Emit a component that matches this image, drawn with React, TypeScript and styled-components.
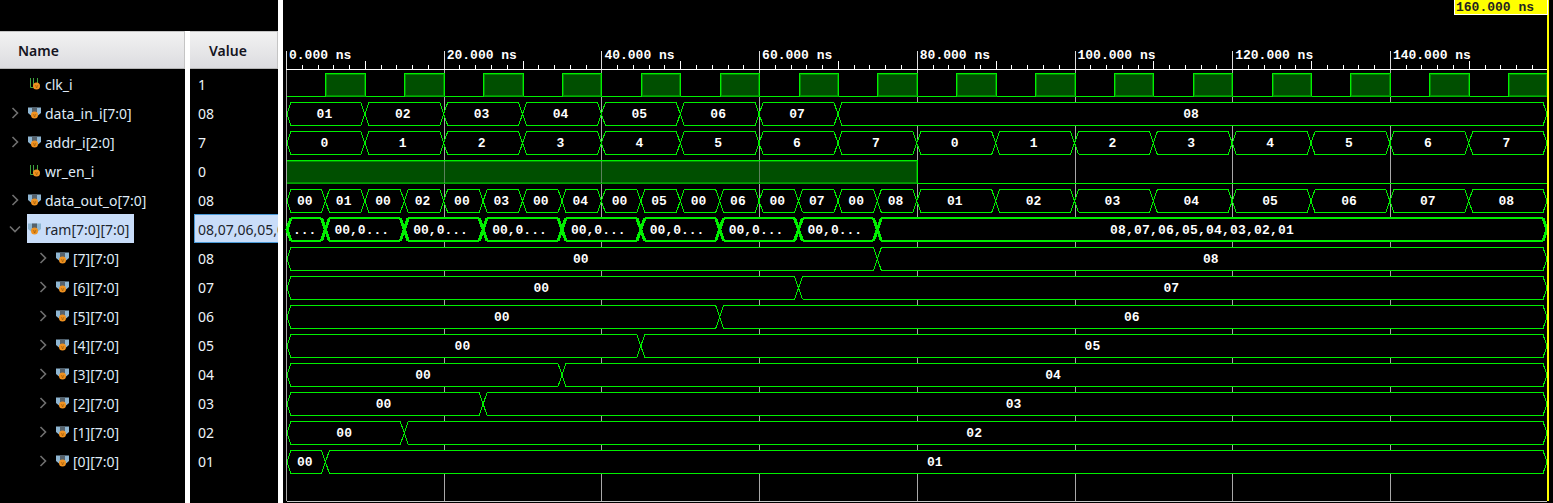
import React from 'react';
import styled, { createGlobalStyle } from 'styled-components';

const X0 = 286;
const NS = 7.885;
const END = 1547;
const GREEN = '#00f000';
const FILL = '#004f00';
const at = (t: number) => X0 + t * NS;
const rowTop = (i: number) => 73 + i * 29;

type Signal = { name: string; value: string; depth: number; kind: 'bit' | 'bus'; open?: boolean; selected?: boolean };

const signals: Signal[] = [
	{ name: 'clk_i', value: '1', depth: 0, kind: 'bit' },
	{ name: 'data_in_i[7:0]', value: '08', depth: 0, kind: 'bus' },
	{ name: 'addr_i[2:0]', value: '7', depth: 0, kind: 'bus' },
	{ name: 'wr_en_i', value: '0', depth: 0, kind: 'bit' },
	{ name: 'data_out_o[7:0]', value: '08', depth: 0, kind: 'bus' },
	{ name: 'ram[7:0][7:0]', value: '08,07,06,05,0', depth: 0, kind: 'bus', open: true, selected: true },
	{ name: '[7][7:0]', value: '08', depth: 1, kind: 'bus' },
	{ name: '[6][7:0]', value: '07', depth: 1, kind: 'bus' },
	{ name: '[5][7:0]', value: '06', depth: 1, kind: 'bus' },
	{ name: '[4][7:0]', value: '05', depth: 1, kind: 'bus' },
	{ name: '[3][7:0]', value: '04', depth: 1, kind: 'bus' },
	{ name: '[2][7:0]', value: '03', depth: 1, kind: 'bus' },
	{ name: '[1][7:0]', value: '02', depth: 1, kind: 'bus' },
	{ name: '[0][7:0]', value: '01', depth: 1, kind: 'bus' },
];

const S = {
	Page: styled.div`
		display: flex;
		width: 1553px;
		height: 503px;
		overflow: hidden;
		background: #000;
	`,
	LeftPane: styled.div`
		display: flex;
		flex-direction: column;
		width: 278px;
		padding-top: 31px;
		box-sizing: border-box;
	`,
	Columns: styled.div`
		display: flex;
		flex: 1;
		gap: 5px;
		background: #fff;
	`,
	NameColumn: styled.div`
		width: 185px;
		background: #000;
	`,
	ValueColumn: styled.div`
		width: 88px;
		background: #000;
		overflow: hidden;
	`,
	ColumnHeader: styled.div<{ $pad: number }>`
		display: flex;
		align-items: center;
		height: 38px;
		box-sizing: border-box;
		padding-left: ${(p) => p.$pad}px;
		background: linear-gradient(#f2f2f2, #dcdce0);
		border-top: 1px solid #c4c4c4;
		border-bottom: 1px solid #b4b4b4;
		border-right: 1px solid #c4c4c4;
		font: 600 14px 'Noto Sans', sans-serif;
		color: #14141e;
	`,
	TreeRow: styled.div<{ $depth: number }>`
		display: flex;
		align-items: center;
		height: 29px;
		padding-left: ${(p) => 9 + p.$depth * 28}px;
	`,
	ChevronSlot: styled.div`
		display: flex;
		width: 18px;
		color: #6f6f6f;
	`,
	Item: styled.div<{ $selected?: boolean }>`
		display: flex;
		align-items: center;
		gap: 3px;
		height: 100%;
		box-sizing: border-box;
		padding: 1px 5px 0 1px;
		background: ${(p) => (p.$selected ? '#c9ddf9' : 'transparent')};
		color: ${(p) => (p.$selected ? '#20242c' : '#dfeaf6')};
		font: 14px 'Noto Sans', sans-serif;
		white-space: nowrap;
	`,
	ValueCell: styled.div<{ $selected?: boolean }>`
		display: flex;
		align-items: center;
		height: 29px;
		box-sizing: border-box;
		margin-left: ${(p) => (p.$selected ? 4 : 0)}px;
		padding: 1px 0 0 ${(p) => (p.$selected ? 3 : 8)}px;
		background: ${(p) => (p.$selected ? '#c9ddf9' : 'transparent')};
		border: ${(p) => (p.$selected ? '1px solid #4a9ad8' : 'none')};
		border-right: none;
		color: ${(p) => (p.$selected ? '#20242c' : '#eef4fa')};
		font: 14px 'Noto Sans', sans-serif;
		white-space: nowrap;
		overflow: hidden;
	`,
	WavePane: styled.div`
		flex: 1;
		border-left: 5px solid #fff;
	`,
	WaveSvg: styled.svg`
		display: block;
		font-family: 'Liberation Mono', monospace;
		font-weight: 700;
		font-size: 13px;
	`,
};

const GlobalStyle = createGlobalStyle`
	html, body {
		margin: 0;
		background: #000;
	}
`;

function Chevron({ open }: { open?: boolean }) {
	return (
		<svg width="12" height="12" viewBox="0 0 12 12" fill="none" stroke="currentColor" strokeWidth="1.6">
			<path d={open ? 'M1 3.5 6 8.5 11 3.5' : 'M3.5 1 8.5 6 3.5 11'} />
		</svg>
	);
}

function SignalIcon({ kind }: { kind: Signal['kind'] }) {
	const cx = kind === 'bit' ? 8.5 : 6.5;
	return (
		<svg width="14" height="14" viewBox="0 0 14 14" fill="none">
			{kind === 'bit' ? (
				<path d="M2.500 1V10.500H5.500V1M9.500 1V7" stroke="#3fa33f" strokeWidth="1" />
			) : (
				<>
					<path d="M0 1.500H13V7L10 9.500H3L0 7Z" fill="#8fb6d2" />
					<path d="M4 1.500H9V6H4Z" fill="#56626c" />
				</>
			)}
			<circle cx={cx} cy="9" r="3.500" fill="#ef9120" />
			<text x={cx} y="11" fontSize="6" fill="#8a4f00" textAnchor="middle" fontFamily="Liberation Sans, sans-serif">
				v
			</text>
		</svg>
	);
}

type Segment = { from: number; to: number; text: string; x?: number };

function series(edges: number[], texts: string[]): Segment[] {
	return texts.map((text, i) => ({ from: edges[i], to: edges[i + 1], text }));
}

const step = (from: number, count: number, size: number) => Array.from({ length: count }, (_, i) => from + i * size);

const hex = (n: number) => `0${n}`;
const dataOutTexts = step(1, 8, 1).flatMap((n) => ['00', hex(n)]);

const traces: { row: number; thick?: boolean; segments: Segment[] }[] = [
	{ row: 1, segments: series([...step(0, 8, 10), 160], [1, 2, 3, 4, 5, 6, 7, 8].map(hex)) },
	{ row: 2, segments: series([...step(0, 16, 10), 160], [...'0123456701234567']) },
	{
		row: 4,
		segments: series(
			[...step(0, 16, 5), ...step(80, 8, 10), 160],
			[...dataOutTexts, ...[1, 2, 3, 4, 5, 6, 7, 8].map(hex)],
		),
	},
	{
		row: 5,
		thick: true,
		segments: [
			{ from: 0, to: 5, text: '...' },
			...step(5, 7, 10).map((t) => ({ from: t, to: t + 10, text: '00,0...', x: at(t) + 9 })),
			{ from: 75, to: 160, text: '08,07,06,05,04,03,02,01', x: 1110 },
		],
	},
	...[8, 7, 6, 5, 4, 3, 2, 1].map((n, i) => ({
		row: 6 + i,
		segments: series([0, 5 + (n - 1) * 10, 160], ['00', hex(n)]),
	})),
];

function Bus({ row, thick, segments }: { row: number; thick?: boolean; segments: Segment[] }) {
	const top = rowTop(row) + (thick ? 0 : 0.5);
	const bottom = top + 23;
	const mid = top + 11.5;
	const stops = (s: Segment) => [s.from === 0 ? at(0) + 1 : at(s.from), s.to === 160 ? END : at(s.to)];
	const rails: string[] = [];
	const crossings: string[] = [];
	segments.forEach((s, i) => {
		const [a, b] = stops(s);
		rails.push(`M${a + 4} ${top}H${b - 4}M${a + 4} ${bottom}H${b - 4}`);
		if (i > 0) crossings.push(`M${a - 4} ${top}L${a + 4} ${bottom}M${a + 4} ${top}L${a - 4} ${bottom}`);
	});
	crossings.push(`M${at(0) + 5} ${top}L${at(0) + 1} ${mid}L${at(0) + 5} ${bottom}`);
	crossings.push(`M${END - 4} ${top}L${END} ${mid}L${END - 4} ${bottom}`);
	return (
		<g>
			{segments.map((s) => {
				const [a, b] = stops(s);
				return (
					<polygon
						key={s.from}
						points={`${a + 4},${top} ${b - 4},${top} ${b},${mid} ${b - 4},${bottom} ${a + 4},${bottom} ${a},${mid}`}
						fill="#000"
					/>
				);
			})}
			<path d={rails.join('')} stroke={GREEN} strokeWidth={thick ? 2 : 1} fill="none" shapeRendering="crispEdges" />
			<path d={crossings.join('')} stroke={GREEN} strokeWidth={thick ? 3 : 1} fill="none" shapeRendering="crispEdges" />
			{segments.map((s) => {
				const [a, b] = stops(s);
				return (
					<text
						key={s.from}
						x={s.x ?? (a + b) / 2 - 1.5}
						y={top + 15.5}
						fill="#fff"
						textAnchor={s.x ? 'start' : 'middle'}
						letterSpacing={s.to - s.from > 80 && s.x ? 0.2 : 0}
					>
						{s.text}
					</text>
				);
			})}
		</g>
	);
}

function Clock() {
	const high = rowTop(0) + 0.5;
	const low = high + 23;
	return (
		<g shapeRendering="crispEdges">
			<path d={`M${at(0) + 1} ${low}H${END}`} stroke={GREEN} fill="none" />
			{step(5, 16, 10).map((t) => {
				const a = Math.round(at(t)) + 0.5;
				const b = Math.min(Math.round(at(t + 5)) + 0.5, END);
				return (
					<g key={t}>
						<rect x={a} y={high} width={b - a} height={23} fill={FILL} />
						<rect x={a + 1} y={high + 1} width={b - a - 2} height={21} fill="none" stroke="#008c00" />
						<path d={`M${a} ${low}V${high}H${b}V${low}`} stroke={GREEN} fill="none" />
						<path d={`M${a} ${low}H${b}`} stroke="#00b400" fill="none" />
					</g>
				);
			})}
		</g>
	);
}

function WriteEnable() {
	const top = rowTop(3) + 0.5;
	const bottom = top + 23;
	const fall = Math.round(at(80)) + 0.5;
	return (
		<g shapeRendering="crispEdges">
			<rect x={at(0) + 1} y={top} width={fall - at(0) - 1} height={23} fill={FILL} />
			<path d={`M${at(0) + 1} ${top + 1}H${fall - 1}V${bottom - 1}H${at(0) + 1}`} stroke="#008c00" fill="none" />
			<path d={`M${at(0) + 1} ${bottom}H${fall}`} stroke="#00a000" fill="none" />
			<path d={`M${at(0) + 1} ${top}H${fall}V${bottom}H${END}`} stroke={GREEN} fill="none" />
		</g>
	);
}

function Waveform() {
	return (
		<S.WaveSvg width="1270" height="503" viewBox="283 0 1270 503">
			<g shapeRendering="crispEdges">
				{step(0, 8, 20).map((t) => (
					<path key={t} d={`M${Math.round(at(t)) + 0.5} 69V501`} stroke="#a8a8a8" fill="none" />
				))}
				<path d={`M${X0 + 0.5} 501.500H${END}`} stroke="#c8c8c8" />
				<path d={`M${X0} 69.500H${END}`} stroke="#fff" />
				{step(0, 80, 2).map((t) => {
					const major = t % 20 === 0;
					const mid = t % 10 === 0;
					return (
						<path
							key={t}
							d={`M${Math.round(at(t)) + 0.5} ${major ? 51 : mid ? 61 : 65}V69`}
							stroke={major ? '#ddd' : '#fff'}
						/>
					);
				})}
			</g>
			{step(0, 8, 20).map((t) => (
				<text key={t} x={at(t) + 3} y={59} fill="#fff">
					{`${t}.000 ns`}
				</text>
			))}
			<Clock />
			<WriteEnable />
			<g shapeRendering="crispEdges" opacity="0.55">
				{[20, 40, 60].map((t) => (
					<path key={t} d={`M${Math.round(at(t)) + 0.5} 161V183`} stroke="#a8a8a8" />
				))}
			</g>
			{traces.map((t) => (
				<Bus key={t.row} {...t} />
			))}
			<rect x="1547" y="0" width="2" height="501" fill="#ffff00" />
			<rect x="1454" y="0" width="94" height="15" fill="#fff" />
			<rect x="1455" y="0" width="92" height="14" fill="#ffff00" />
			<text x="1456" y="11" fill="#222">
				160.000 ns
			</text>
		</S.WaveSvg>
	);
}

function App() {
	return (
		<S.Page>
			<GlobalStyle />
			<S.LeftPane>
				<S.Columns>
					<S.NameColumn>
						<S.ColumnHeader $pad={18}>Name</S.ColumnHeader>
						{signals.map((s) => (
							<S.TreeRow key={s.name} $depth={s.depth}>
								<S.ChevronSlot>{s.kind === 'bus' && <Chevron open={s.open} />}</S.ChevronSlot>
								<S.Item $selected={s.selected}>
									<SignalIcon kind={s.kind} />
									{s.name}
								</S.Item>
							</S.TreeRow>
						))}
					</S.NameColumn>
					<S.ValueColumn>
						<S.ColumnHeader $pad={19}>Value</S.ColumnHeader>
						{signals.map((s) => (
							<S.ValueCell key={s.name} $selected={s.selected}>
								{s.value}
							</S.ValueCell>
						))}
					</S.ValueColumn>
				</S.Columns>
			</S.LeftPane>
			<S.WavePane>
				<Waveform />
			</S.WavePane>
		</S.Page>
	);
}

export default App;
